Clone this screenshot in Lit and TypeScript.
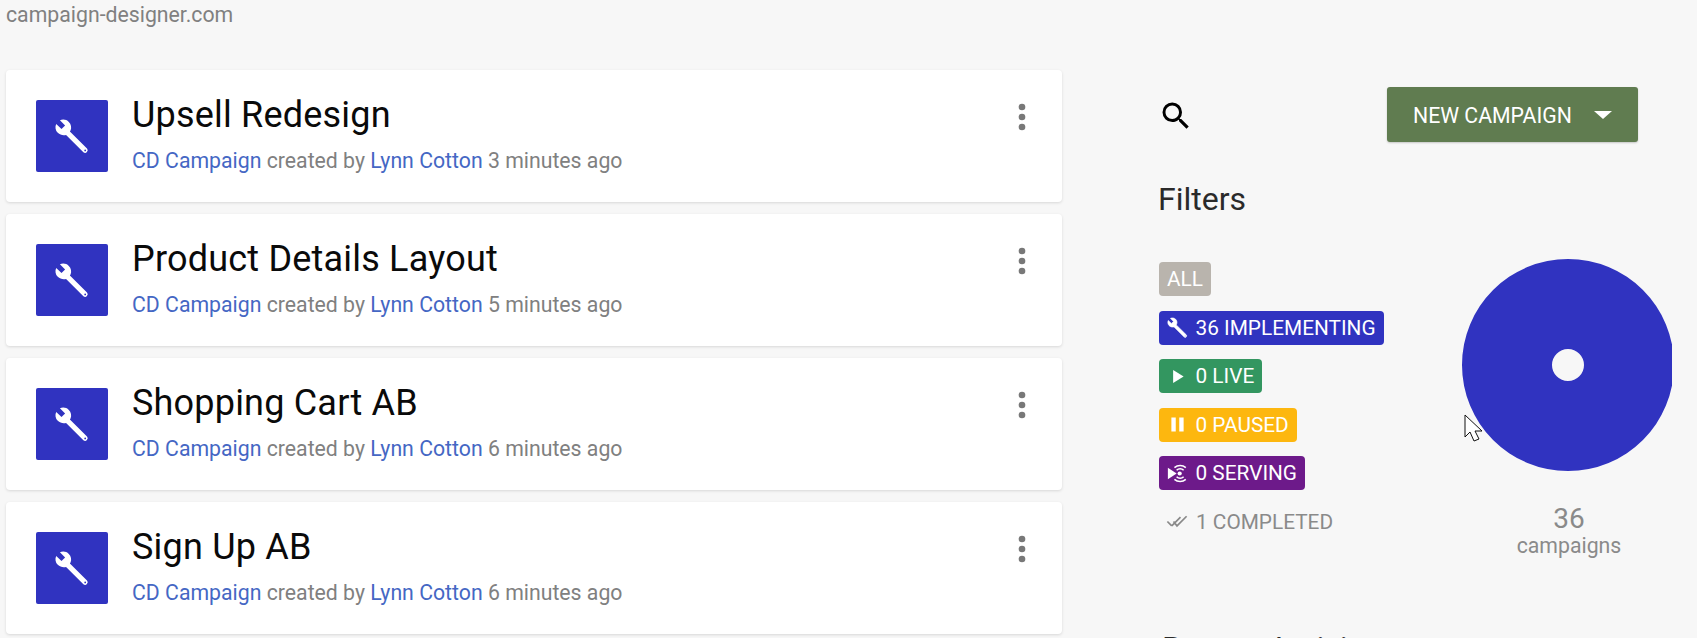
import { LitElement, html, css, svg } from "lit";
import { customElement } from "lit/decorators.js";

const wrench = svg`<path fill-rule="evenodd" d="M10.6 9 22 20.4a1.7 1.7 0 0 1-2.400 2.400L8.040 11.320C6.200 11.800 4.040 11.400 2.520 9.880 .92 8.280 .52 5.880 1.480 3.960L5 7.400 7.400 5 3.960 1.560C5.880 .68 8.280 1 9.880 2.600 11.400 4.120 11.800 6.280 11.080 8.120ZM21.400 21.600a.6 .6 0 1 1-1.200 0 .6 .6 0 1 1 1.200 0Z"/>`;

const campaigns = [
  { name: "Upsell Redesign", age: "3 minutes ago" },
  { name: "Product Details Layout", age: "5 minutes ago" },
  { name: "Shopping Cart AB", age: "6 minutes ago" },
  { name: "Sign Up AB", age: "6 minutes ago" },
];

@customElement("app-root")
export class AppRoot extends LitElement {
  static styles = css`
    :host {
      display: block;
      position: relative;
      width: 1697px;
      height: 638px;
      overflow: hidden;
      background: #f7f7f7;
      font-family: Roboto, "Liberation Sans", sans-serif;
      color: #8a8a8a;
    }
    .domain {
      height: 70px;
      padding-left: 6px;
      box-sizing: border-box;
      font-size: 21.25px;
      line-height: 30px;
      color: #808080;
    }
    .main {
      display: grid;
      grid-template-columns: 1056px 513px;
      column-gap: 97px;
      margin-left: 6px;
    }
    .list {
      display: flex;
      flex-direction: column;
      gap: 12px;
    }
    .card {
      display: flex;
      height: 132px;
      box-sizing: border-box;
      padding: 30px 20px 0 30px;
      background: #fff;
      border-radius: 4px;
      box-shadow: 0 1px 3px rgba(0, 0, 0, 0.13);
    }
    .thumb {
      display: flex;
      align-items: center;
      justify-content: center;
      width: 72px;
      height: 72px;
      flex: none;
      border-radius: 2px;
      background: #3033c0;
    }
    .thumb svg {
      width: 36px;
      height: 36px;
      fill: #fff;
    }
    .text {
      flex: 1;
      margin-left: 24px;
    }
    .title {
      font-size: 36px;
      line-height: 40px;
      margin-top: -5px;
      color: #0a0a0a;
      letter-spacing: 0.2px;
    }
    .sub {
      margin-top: 13px;
      font-size: 21.25px;
      line-height: 26px;
      color: #808080;
    }
    .sub a {
      color: #4567c4;
      text-decoration: none;
    }
    .more {
      width: 40px;
      height: 40px;
      margin-top: -3px;
      fill: #787878;
    }
    .side {
      padding-top: 17px;
    }
    .tools {
      display: flex;
      align-items: center;
      justify-content: space-between;
      margin-right: 34px;
    }
    .search {
      width: 36px;
      height: 36px;
      margin: 3px 0 0 -1px;
      fill: #000;
    }
    .new {
      display: flex;
      align-items: center;
      width: 251px;
      height: 55px;
      box-sizing: border-box;
      padding: 1px 0 0 26px;
      border-radius: 3px;
      background: #607c50;
      box-shadow: 0 1px 2px rgba(0, 0, 0, 0.2);
      color: #fff;
      font-size: 21.25px;
    }
    .caret {
      width: 0;
      height: 0;
      margin-left: 22px;
      border-left: 9px solid transparent;
      border-right: 9px solid transparent;
      border-top: 8px solid #fff;
    }
    h2 {
      margin: 0;
      font-weight: 400;
      font-size: 32px;
      line-height: 36px;
      color: #2a2a2a;
    }
    .filters-h {
      margin: 39px 0 0 -1px;
    }
    .filters {
      display: flex;
      margin-top: 42px;
      height: 300px;
    }
    .chips {
      width: 303px;
      padding-top: 3px;
      display: flex;
      flex-direction: column;
      align-items: flex-start;
      gap: 14.5px;
    }
    .chip {
      display: flex;
      align-items: center;
      height: 34px;
      box-sizing: border-box;
      padding: 0 8px;
      border-radius: 4px;
      color: #fff;
      font-size: 20.8px;
    }
    .chip svg {
      width: 21px;
      height: 21px;
      margin-right: 7.5px;
      fill: #fff;
    }
    .impl svg {
      stroke: #fff;
      stroke-width: 0.7;
    }
    .all { background: #b9b4ad; }
    .impl { background: #3033c0; }
    .live { background: #339660; }
    .paused { background: #fdb70f; }
    .serving { background: #6d1a8a; }
    .done { color: #8a8a8a; padding-left: 6px; }
    .done svg {
      width: 24px;
      fill: none;
      stroke: #8a8a8a;
      stroke-width: 2;
      margin-right: 7px;
    }
    .chart {
      width: 210px;
      overflow: hidden;
      text-align: center;
    }
    .chart svg {
      display: block;
      width: 212px;
      height: 212px;
    }
    .count {
      margin-top: 32px;
      padding-left: 4px;
      font-size: 28px;
      line-height: 32px;
    }
    .unit {
      padding-left: 4px;
      font-size: 21.25px;
      line-height: 22px;
    }
    .recent {
      margin-top: 71px;
      margin-left: 3px;
    }
    .pointer {
      position: absolute;
      left: 1464px;
      top: 414px;
      width: 20px;
      height: 28px;
    }
  `;

  render() {
    return html`
      <div class="domain">campaign-designer.com</div>
      <div class="main">
        <div class="list">
          ${campaigns.map(
            (c) => html`
              <div class="card">
                <div class="thumb"><svg viewBox="0 0 24 24">${wrench}</svg></div>
                <div class="text">
                  <div class="title">${c.name}</div>
                  <div class="sub"><a>CD Campaign</a> created by <a>Lynn Cotton</a> ${c.age}</div>
                </div>
                <svg class="more" viewBox="0 0 24 24">
                  <circle cx="12" cy="6" r="2"></circle>
                  <circle cx="12" cy="12" r="2"></circle>
                  <circle cx="12" cy="18" r="2"></circle>
                </svg>
              </div>
            `
          )}
        </div>
        <div class="side">
          <div class="tools">
            <svg class="search" viewBox="0 0 24 24">
              <path d="M15.5 14h-.79l-.28-.27A6.47 6.47 0 0 0 16 9.5 6.5 6.5 0 1 0 9.5 16c1.61 0 3.09-.59 4.23-1.57l.27.28v.79l5 4.99L20.49 19l-4.99-5zm-6 0C7.01 14 5 11.99 5 9.5S7.01 5 9.5 5 14 7.01 14 9.5 11.99 14 9.5 14z"></path>
            </svg>
            <div class="new">NEW CAMPAIGN<span class="caret"></span></div>
          </div>
          <h2 class="filters-h">Filters</h2>
          <div class="filters">
            <div class="chips">
              <div class="chip all">ALL</div>
              <div class="chip impl"><svg viewBox="0 0 24 24">${wrench}</svg>36 IMPLEMENTING</div>
              <div class="chip live"><svg viewBox="0 0 24 24"><path d="M7 4.5v15l12-7.5z"></path></svg>0 LIVE</div>
              <div class="chip paused"><svg viewBox="0 0 24 24"><path d="M5 4h5v16H5zM14 4h5v16h-5z"></path></svg>0 PAUSED</div>
              <div class="chip serving">
                <svg viewBox="0 0 24 24">
                  <path d="M1 5.5 11 12 1 18.500z"></path>
                  <circle cx="14.500" cy="12" r="2.400"></circle>
                  <path fill="none" stroke="#fff" stroke-width="1.800" d="M11 8.200a5.500 5.500 0 0 1 8 0M11 15.800a5.500 5.500 0 0 0 8 0M8.500 5.200a10 10 0 0 1 13 0M8.500 18.800a10 10 0 0 0 13 0"></path>
                </svg>0 SERVING
              </div>
              <div class="chip done">
                <svg viewBox="0 0 24 24"><path d="M1 12l5 5M6 17 L16 7M8 12l4 5L23 6"></path></svg>1 COMPLETED
              </div>
            </div>
            <div class="chart">
              <svg viewBox="0 0 212 212">
                <path fill="#3033c0" fill-rule="evenodd" d="M106 0a106 106 0 1 1 0 212 106 106 0 1 1 0-212ZM106 90a16 16 0 1 0 0 32 16 16 0 1 0 0-32Z"></path>
              </svg>
              <div class="count">36</div>
              <div class="unit">campaigns</div>
            </div>
          </div>
          <h2 class="recent">Recent Activity</h2>
        </div>
      </div>
      <svg class="pointer" viewBox="0 0 20 28">
        <path fill="#fff" stroke="#111" stroke-width="1" d="M1 1v22l5-5 4 9 5-2-4-8h7z"></path>
      </svg>
    `;
  }
}
